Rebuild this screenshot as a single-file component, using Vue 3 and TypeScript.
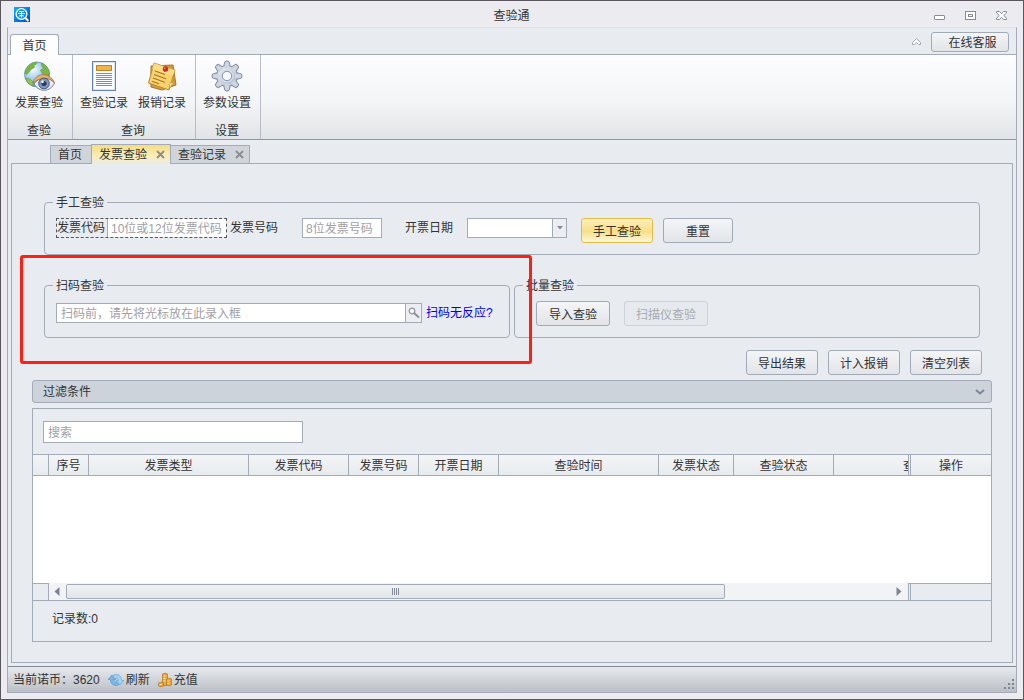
<script setup lang="ts">
import { ref } from 'vue'

interface Column {
  title: string
  kind: string
}

const columns: Column[] = [
  { title: '', kind: 'w16' },
  { title: '序号', kind: 'w40' },
  { title: '发票类型', kind: 'w160' },
  { title: '发票代码', kind: 'w100' },
  { title: '发票号码', kind: 'w70' },
  { title: '开票日期', kind: 'w80' },
  { title: '查验时间', kind: 'w160' },
  { title: '发票状态', kind: 'w75' },
  { title: '查验状态', kind: 'w100' },
  { title: '查', kind: 'rest' },
  { title: '', kind: 'split' },
  { title: '操作', kind: 'last' },
]

const code = ref('')
const num = ref('')
const date = ref('')
const scan = ref('')
const keyword = ref('')
const gearTeeth = [0, 45, 90, 135, 180, 225, 270, 315]
</script>

<template>
  <div class="window">
    <header class="titlebar">
      <svg class="logo" width="16" height="16" viewBox="0 0 16 16">
        <defs>
          <linearGradient id="lg" x1="0" y1="0" x2="1" y2="1">
            <stop offset="0" stop-color="#00b4f5" />
            <stop offset="1" stop-color="#0646d8" />
          </linearGradient>
        </defs>
        <rect width="16" height="15" fill="url(#lg)" />
        <circle cx="7.5" cy="7" r="5.4" fill="#1690ea" stroke="#fff" stroke-width="1.3" />
        <path d="M5 4.5h5M4 6.5h7M5.5 8.5h4M7.5 4v6.5M5 10.3l1-1M10 10.3l-1-1" stroke="#e4f6ff" stroke-width="1" fill="none" />
        <path d="M11.4 11l3 3" stroke="#fff" stroke-width="1.8" />
      </svg>
      <h1>查验通</h1>
      <div class="winbtns">
        <button aria-label="最小化"><svg width="13" height="11" viewBox="0 0 13 11"><rect x="1.5" y="5.5" width="10" height="4" rx=".5" fill="#fff" stroke="#858c9a" /></svg></button>
        <button aria-label="最大化"><svg width="13" height="11" viewBox="0 0 13 11"><rect x="1.5" y="1.5" width="10" height="8" fill="#fff" stroke="#858c9a" /><rect x="4.5" y="4.5" width="4" height="2" fill="#fff" stroke="#858c9a" /></svg></button>
        <button aria-label="关闭"><svg width="13" height="11" viewBox="0 0 13 11"><path d="M1.5 1.5h3l2 2.2 2-2.2h3v1.4L8.8 5.5l2.7 2.8v1.2h-3l-2-2.2-2 2.2h-3V8.300l2.700-2.800L1.500 2.900z" fill="#fff" stroke="#858c9a" /></svg></button>
      </div>
    </header>

    <div class="frame">
      <nav class="menubar">
        <button class="menutab">首页</button>
        <button class="fold" aria-label="折叠">
          <svg width="11" height="9" viewBox="0 0 11 9"><path d="M1.500 5.500l4-4 4 4v2h-2l-2-2-2 2h-2z" fill="#fff" stroke="#a4a9b4" /></svg>
        </button>
        <button class="btn service">在线客服</button>
      </nav>

      <div class="ribbon">
        <section class="group">
          <div class="tools">
            <button class="tool">
              <svg width="32" height="32" viewBox="0 0 32 32">
                <defs>
                  <radialGradient id="globe" cx=".35" cy=".3" r=".8">
                    <stop offset="0" stop-color="#f6fcff" />
                    <stop offset=".5" stop-color="#9dccef" />
                    <stop offset="1" stop-color="#3173bd" />
                  </radialGradient>
                </defs>
                <circle cx="14" cy="14.500" r="12.500" fill="url(#globe)" stroke="#5e93ba" stroke-width=".8" />
                <path d="M4 8c2-3 5-5.500 9-6l1 1.500-3 2 .5 2-3.500 2-3 4-2 1-1-1C2 11.500 3 9.500 4 8z" fill="#7db544" stroke="#5e9432" stroke-width=".5" />
                <path d="M18.500 3c5 2 8 6.500 8 11l-3 2-4-2-2-4 3-1.500-2-3z" fill="#7db544" stroke="#5e9432" stroke-width=".5" />
                <path d="M3 18l4 1 3 3 0 4C6 24.500 3.500 22 3 18z" fill="#8fc451" stroke="#5e9432" stroke-width=".5" />
                <path d="M11 24c4-7 15-8 20.500-1-4 9-15 10-20.500 1z" fill="#e8ebf3" stroke="#76809b" />
                <path d="M10 23c2-10 16-12 21.500-.5-6-6-14.500-5.500-21.500.5z" fill="#e6b06b" stroke="#ab7235" stroke-width=".8" />
                <circle cx="21" cy="23.500" r="5.300" fill="#8299bd" stroke="#465a80" />
                <circle cx="21" cy="23.500" r="2.600" fill="#2d3d5d" />
                <circle cx="19.500" cy="21.800" r="1.300" fill="#fff" />
              </svg>
              <span>发票查验</span>
            </button>
          </div>
          <h2>查验</h2>
        </section>
        <section class="group">
          <div class="tools">
            <button class="tool">
              <svg width="32" height="32" viewBox="0 0 32 32">
                <rect x="4.500" y="1.500" width="23" height="29" fill="#fbfcff" stroke="#6281bd" />
                <rect x="5.500" y="2.500" width="21" height="27" fill="none" stroke="#d8e3f7" />
                <rect x="8.500" y="5.500" width="15" height="5" fill="#edb64d" stroke="#c28225" />
                <path d="M8 13.500h16M8 15.500h16M8 17.500h16M8 19.500h16M8 21.500h16M8 23.500h16M8 25.500h16" stroke="#6e8fca" />
              </svg>
              <span>查验记录</span>
            </button>
            <button class="tool">
              <svg width="32" height="32" viewBox="0 0 32 32">
                <path d="M5 6l22-1 3 20-14 5-11-3z" fill="#d39b3a" stroke="#a97522" />
                <path d="M8 3l21 7-6 20-20.500-7z" fill="#f8d16d" stroke="#bb872b" />
                <path d="M8 3l21 7-2 6L6 9z" fill="#fbdf91" opacity=".7" />
                <path d="M9 11l10 3.500M8 14.500l12 4.300M7 18l12 4.300M6 21.300l7 2.500" stroke="#a06c23" />
                <path d="M23 29l1-6 4-1z" fill="#fff0bd" stroke="#bb872b" stroke-width=".6" />
                <path d="M18 12l2-2" stroke="#777" />
                <circle cx="19.500" cy="9" r="2.700" fill="#d52a22" />
                <circle cx="18.800" cy="8.200" r=".8" fill="#ff9c8f" />
              </svg>
              <span>报销记录</span>
            </button>
          </div>
          <h2>查询</h2>
        </section>
        <section class="group">
          <div class="tools">
            <button class="tool">
              <svg width="32" height="32" viewBox="0 0 32 32">
                <defs>
                  <linearGradient id="gear" x1="0" y1="0" x2="1" y2="1">
                    <stop offset="0" stop-color="#eef1f6" />
                    <stop offset="1" stop-color="#a9b5c8" />
                  </linearGradient>
                </defs>
                <g fill="#c9d1de" stroke="#7f8da6">
                  <path v-for="a in gearTeeth" :key="a" d="M12.500 7l1.500-5.500q2-1 4 0l1.500 5.500z" :transform="`rotate(${a} 16 16)`" />
                </g>
                <circle cx="16" cy="16" r="10.500" fill="url(#gear)" stroke="#7f8da6" />
                <g fill="#cfd6e1">
                  <path v-for="a in gearTeeth" :key="a" d="M13.200 8l1.300-5.800h3l1.300 5.800z" :transform="`rotate(${a} 16 16)`" />
                </g>
                <circle cx="16" cy="16" r="6.500" fill="#d9dee8" />
                <circle cx="16" cy="16" r="4.700" fill="#f7f8fb" stroke="#8391aa" />
              </svg>
              <span>参数设置</span>
            </button>
          </div>
          <h2>设置</h2>
        </section>
      </div>

      <div class="doctabs">
        <button class="doctab">首页</button>
        <button class="doctab active">发票查验
          <svg width="9" height="9" viewBox="0 0 9 9"><path d="M1 1l7 7M8 1l-7 7" stroke="#8b8c90" stroke-width="1.800" /></svg>
        </button>
        <button class="doctab">查验记录
          <svg width="9" height="9" viewBox="0 0 9 9"><path d="M1 1l7 7M8 1l-7 7" stroke="#8b8c90" stroke-width="1.800" /></svg>
        </button>
      </div>

      <main class="panel">
        <fieldset class="manual">
          <legend>手工查验</legend>
          <div class="row">
            <div class="focusbox">
              <label for="code">发票代码</label>
              <input id="code" v-model="code" placeholder="10位或12位发票代码" />
            </div>
            <label class="numlabel" for="num">发票号码</label>
            <input id="num" v-model="num" class="num" placeholder="8位发票号码" />
            <label class="datelabel" for="date">开票日期</label>
            <div class="selectwrap">
              <select id="date" v-model="date"><option value=""></option></select>
              <span class="arrow"><svg width="6" height="4" viewBox="0 0 6 4"><path d="M0 0h6L3 3.500z" fill="#858b9b" /></svg></span>
            </div>
            <button class="btn primary">手工查验</button>
            <button class="btn reset">重置</button>
          </div>
        </fieldset>

        <div class="pair">
          <fieldset>
            <legend>扫码查验</legend>
            <div class="row scanrow">
              <input v-model="scan" aria-label="扫码查验" class="scan" placeholder="扫码前，请先将光标放在此录入框" />
              <button class="lookup" aria-label="查找">
                <svg width="12" height="12" viewBox="0 0 12 12"><circle cx="4" cy="4" r="2.800" fill="#f6f7f9" stroke="#969aa4" stroke-width="1.300" /><path d="M6 6l5 4.500" stroke="#8d919c" stroke-width="2" /></svg>
              </button>
              <a href="#">扫码无反应?</a>
            </div>
          </fieldset>
          <fieldset>
            <legend>批量查验</legend>
            <div class="row batch">
              <button class="btn import">导入查验</button>
              <button class="btn scanner" disabled>扫描仪查验</button>
            </div>
          </fieldset>
          <div class="highlight"></div>
        </div>

        <div class="actions">
          <button class="btn">导出结果</button>
          <button class="btn">计入报销</button>
          <button class="btn">清空列表</button>
        </div>

        <button class="filter">
          <span>过滤条件</span>
          <svg width="10" height="6" viewBox="0 0 10 6"><path d="M1 1l4 3.500L9 1" fill="none" stroke="#7d8595" stroke-width="2" /></svg>
        </button>

        <section class="gridbox">
          <input v-model="keyword" class="search" aria-label="搜索" placeholder="搜索" />
          <table>
            <thead>
              <tr>
                <th v-for="(c, i) in columns" :key="i" :class="c.kind">{{ c.title }}</th>
              </tr>
            </thead>
          </table>
          <div class="rows"></div>
          <div class="hscroll">
            <div class="corner"></div>
            <div class="track">
              <svg width="6" height="9" viewBox="0 0 6 9"><path d="M5.500 0v9L.5 4.500z" fill="#7d8394" /></svg>
              <div class="rail"><div class="thumb"><i></i><i></i><i></i><i></i></div></div>
              <svg width="6" height="9" viewBox="0 0 6 9"><path d="M.5 0v9l5-4.500z" fill="#7d8394" /></svg>
            </div>
            <div class="seam"></div>
            <div class="pinned"></div>
          </div>
          <p class="count">记录数:0</p>
        </section>
      </main>

      <footer class="status">
        <span class="coins">当前诺币：3620</span>
        <button>
          <svg width="16" height="16" viewBox="0 0 16 16">
            <ellipse cx="8" cy="8" rx="7" ry="6" fill="#d3e8f6" />
            <path d="M0 7.500l4-4.500 4 4.500H5.800c.3 2 2.200 2.800 4.200 2l1.500 3C7.500 15 2.500 13 2 7.500z" fill="#7db5df" stroke="#4a8cc2" stroke-width=".6" />
            <path d="M16 8.500L12 13 8 8.500h2.200c-.3-2-2.200-2.800-4.200-2l-1.500-3C8.500 1 13.500 3 14 8.500z" fill="#a5cfec" stroke="#5b9acb" stroke-width=".6" />
          </svg>刷新
        </button>
        <button>
          <svg width="14" height="16" viewBox="0 0 14 16">
            <g fill="#e9a93a" stroke="#b3711d" stroke-width=".7">
              <path d="M4.500 2q2.500-1.500 5 0v11q-2.500 1.500-5 0z" />
              <path d="M8.500 7q2.500-1.500 5 0v6q-2.500 1.500-5 0z" />
              <path d="M.5 11q2.500-1.500 5 0v3q-2.500 1.500-5 0z" />
            </g>
            <path d="M5.500 4h2M5.500 6.500h2M5.500 9h2M9.500 9h2M9.500 11.500h2M1.500 12.500h2" stroke="#ffe79d" />
          </svg>充值
        </button>
        <svg class="grip" width="11" height="11" viewBox="0 0 11 11"><path d="M8 0h2v2H8zM8 4h2v2H8zM4 4h2v2H4zM8 8h2v2H8zM4 8h2v2H4zM0 8h2v2H0z" fill="#7e8492" /></svg>
      </footer>
    </div>
  </div>
</template>

<style>
body {
  margin: 0;
}
</style>

<style scoped>
* {
  box-sizing: border-box;
}
.window {
  display: flex;
  flex-direction: column;
  min-height: 100vh;
  padding: 0 6px 6px;
  border: 1px solid #59565e;
  background: #ecebf0;
  color: #333;
  font: 12px/16px "Liberation Sans", "Noto Sans CJK SC", sans-serif;
}
button, input, select {
  font: inherit;
  color: inherit;
  margin: 0;
  padding: 0;
}
button {
  border: 0;
  background: none;
  white-space: nowrap;
}
h1, h2, p {
  margin: 0;
  font-size: 12px;
  font-weight: normal;
}
svg {
  display: block;
  flex: none;
}
.titlebar {
  display: grid;
  grid-template-columns: 1fr auto 1fr;
  align-items: center;
  height: 26px;
  padding: 2px 8px 0 7px;
}
.titlebar h1 {
  padding-top: 2px;
}
.winbtns {
  display: flex;
  justify-content: flex-end;
  gap: 18px;
  padding-right: 1px;
}
.frame {
  flex: 1;
  display: flex;
  flex-direction: column;
  border: 1px solid #a4abb8;
  border-top-color: #dfe2e5;
  background: #e8ebf0;
}
.menubar {
  display: flex;
  height: 27px;
  padding: 6px 7px 0 2px;
  border-bottom: 1px solid #a4abb8;
}
.menutab {
  height: 21px;
  width: 49px;
  padding-top: 2px;
  border: 1px solid #a4abb8;
  border-bottom: 0;
  border-radius: 3px 3px 0 0;
  background: #fdfdfe;
}
.fold {
  margin-left: auto;
  padding-bottom: 6px;
}
.btn {
  height: 25px;
  padding-top: 2px;
  border: 1px solid #a2aab7;
  border-radius: 3px;
  background: linear-gradient(#f4f5f7, #e2e4e8);
}
.service {
  height: 20px;
  width: 78px;
  margin: -2px 0 0 9px;
  padding-left: 5px;
}
.ribbon {
  display: flex;
  height: 85px;
  border-bottom: 1px solid #8f95a1;
  background: linear-gradient(#fdfdff, #f4f5f6 55%, #e1e4e7);
}
.group {
  display: flex;
  flex-direction: column;
  align-items: center;
  justify-content: space-between;
  padding: 5px 9px 0 7px;
  border-right: 1px solid #b7bcc6;
}
.group h2 {
  line-height: 15px;
}
.tools {
  display: flex;
  gap: 10px;
}
.tool {
  display: flex;
  flex-direction: column;
  align-items: center;
  gap: 3px;
}
.doctabs {
  display: flex;
  align-items: flex-end;
  padding: 4px 0 0 42px;
  margin-bottom: -1px;
  position: relative;
}
.doctab {
  display: flex;
  align-items: center;
  gap: 9px;
  height: 19px;
  padding: 0 5px 0 7px;
  border: 1px solid #a4abb8;
  background: #d0d4db;
}
.doctab:first-child {
  padding: 0 9px 0 7px;
  border-right: 0;
}
.doctab.active {
  height: 20px;
  border-bottom: 0;
  background: linear-gradient(#f5dd83, #faedb8 60%, #eceae4);
}
.doctab.active + .doctab {
  border-left: 0;
}
.panel {
  flex: 1;
  display: flex;
  flex-direction: column;
  margin: 0 3px 3px;
  padding: 31px 20px 20px;
  border: 1px solid #a4abb8;
}
fieldset {
  min-width: 0;
  height: 60px;
  margin: 0;
  padding: 0 8px;
  border: 1px solid #a4abb8;
  border-radius: 4px;
}
legend {
  height: 15px;
  padding: 0 3px;
  line-height: 17px;
}
.manual {
  margin: 0 12px;
}
.row {
  display: flex;
  align-items: flex-start;
  padding: 8px 0 0 3px;
  line-height: 20px;
}
.row label, .row a {
  white-space: nowrap;
}
input, select {
  height: 20px;
  padding: 1px 3px 0;
  border: 1px solid #a4abb8;
  border-radius: 0;
  background: #fff;
  outline: none;
}
input::placeholder {
  color: #a0a0a6;
  opacity: 1;
}
.focusbox {
  display: flex;
  flex: none;
  height: 20px;
  width: 171px;
  border: 1px dashed #55555f;
  line-height: 18px;
}
.focusbox label {
  width: 50px;
  flex: none;
}
.focusbox input {
  width: 119px;
  height: 18px;
  border-width: 0 0 0 1px;
}
.numlabel, .datelabel {
  flex: none;
}
.numlabel {
  width: 75px;
  padding-left: 3px;
}
.datelabel {
  width: 85px;
  padding-left: 23px;
}
.num {
  width: 80px;
}
.selectwrap {
  display: grid;
  grid-template-columns: 85px 15px;
  width: 100px;
  margin-right: 14px;
}
select {
  grid-area: 1 / 1 / 2 / 3;
  width: 100%;
  appearance: none;
}
.arrow {
  grid-area: 1 / 2;
  display: grid;
  place-items: center;
  margin: 1px 1px 1px 0;
  border-left: 1px solid #a4abb8;
  background: #eceef1;
  pointer-events: none;
}
.primary {
  width: 72px;
  margin-right: 10px;
  border-color: #e4bc48;
  background: linear-gradient(#fbeeb9, #f7df87 55%, #fdf7dc);
}
.reset {
  width: 70px;
}
.pair {
  position: relative;
  display: grid;
  grid-template-columns: 1fr 1fr;
  gap: 4px;
  margin: 23px 12px 0;
}
.scanrow {
  padding-top: 10px;
}
.scan {
  flex: 1;
  min-width: 0;
  padding-left: 4px;
}
.lookup {
  display: grid;
  place-items: center;
  height: 20px;
  width: 16px;
  border: 1px solid #a4abb8;
  border-left: 0;
  background: #eceef1;
}
a {
  width: 75px;
  margin-left: 4px;
  color: #0000f0;
  text-decoration: none;
}
.batch {
  gap: 14px;
  padding-left: 13px;
}
.import {
  width: 74px;
}
.scanner {
  width: 84px;
  color: #a6abb1;
  border-color: #cdd2d8;
  background: #e6e9ed;
}
.highlight {
  position: absolute;
  top: -23px;
  left: -24px;
  width: calc(50% + 44px);
  height: 109px;
  border: 3px solid #ff2015;
  border-radius: 3px;
  pointer-events: none;
}
.actions {
  display: flex;
  justify-content: flex-end;
  gap: 10px;
  margin: 12px 10px 5px;
}
.actions .btn {
  width: 72px;
}
.filter {
  display: flex;
  align-items: center;
  justify-content: space-between;
  height: 23px;
  padding: 1px 6px 0 10px;
  border: 1px solid #a4abb8;
  border-radius: 3px;
  background: #cdd3db;
}
.gridbox {
  flex: 1;
  display: flex;
  flex-direction: column;
  margin-top: 5px;
  border: 1px solid #a4abb8;
}
.search {
  width: 260px;
  height: 22px;
  margin: 12px 0 11px 10px;
  padding-left: 4px;
}
table {
  width: 100%;
  table-layout: fixed;
  border-collapse: separate;
  border-spacing: 0;
}
th {
  height: 22px;
  padding: 1px 0 0;
  overflow: hidden;
  border: solid #a4abb8;
  border-width: 1px 1px 1px 0;
  background: linear-gradient(#f3f4f6, #e8ebee);
  font-weight: normal;
  white-space: nowrap;
}
.w16 { width: 16px; }
.w40 { width: 40px; }
.w70 { width: 70px; }
.w75 { width: 75px; }
.w80 { width: 80px; }
.w100 { width: 100px; }
.w160 { width: 160px; }
.rest {
  padding-left: 69px;
  text-align: left;
  text-overflow: clip;
}
.split { width: 2px; }
.last {
  width: 80px;
  border-right: 0;
}
.rows {
  flex: 1;
  background: #fff;
}
.hscroll {
  display: grid;
  grid-template-columns: 16px 1fr 2px 80px;
  height: 18px;
  border-bottom: 1px solid #a4abb8;
}
.corner, .seam {
  border: solid #a4abb8;
  border-width: 1px 1px 0 0;
}
.pinned {
  border-top: 1px solid #a4abb8;
}
.track {
  display: flex;
  align-items: center;
  gap: 6px;
  padding: 0 6px 0 5px;
  border-right: 1px solid #a4abb8;
  background: #f2f3f5;
}
.rail {
  flex: 1;
}
.thumb {
  display: flex;
  align-items: center;
  justify-content: center;
  gap: 1px;
  width: 80%;
  height: 15px;
  border: 1px solid #a2aab7;
  border-radius: 2px;
  background: linear-gradient(#f1f2f5, #e2e6e7);
}
.thumb i {
  width: 1px;
  height: 7px;
  background: #858b99;
}
.count {
  height: 40px;
  padding-left: 19px;
  line-height: 37px;
}
.status {
  display: flex;
  align-items: center;
  gap: 8px;
  height: 26px;
  padding: 0 1px 0 5px;
  border-top: 1px solid #7f8591;
  background: linear-gradient(#e6e9ed, #bcc0c6);
}
.status button {
  display: flex;
  align-items: center;
  gap: 2px;
}
.grip {
  align-self: flex-end;
  margin: 0 0 2px auto;
}
</style>
